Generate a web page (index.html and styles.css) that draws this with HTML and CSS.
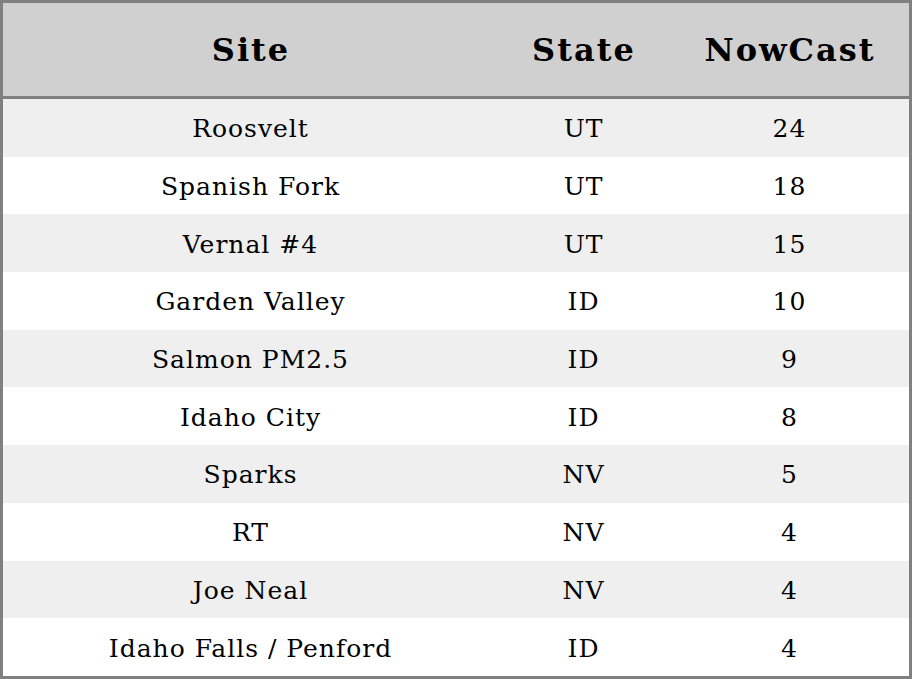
FILE: index.html
```html
<!DOCTYPE html>
<html>
<head>
<meta charset="utf-8">
<link rel="stylesheet" href="styles.css">
</head>
<body>
<div class="frame">
<table class="tbl">
<colgroup><col class="c1"><col class="c2"><col class="c3"></colgroup>
<thead>
<tr><th>Site</th><th>State</th><th>NowCast</th></tr>
</thead>
<tbody>
<tr><td>Roosvelt</td><td>UT</td><td>24</td></tr>
<tr><td>Spanish Fork</td><td>UT</td><td>18</td></tr>
<tr><td>Vernal #4</td><td>UT</td><td>15</td></tr>
<tr><td>Garden Valley</td><td>ID</td><td>10</td></tr>
<tr><td>Salmon PM2.5</td><td>ID</td><td>9</td></tr>
<tr><td>Idaho City</td><td>ID</td><td>8</td></tr>
<tr><td>Sparks</td><td>NV</td><td>5</td></tr>
<tr><td>RT</td><td>NV</td><td>4</td></tr>
<tr><td>Joe Neal</td><td>NV</td><td>4</td></tr>
<tr><td>Idaho Falls / Penford</td><td>ID</td><td>4</td></tr>
</tbody>
</table>
</div>
</body>
</html>
```
FILE: styles.css
```css
html, body {
  margin: 0;
  padding: 0;
  background: #ffffff;
}
.frame {
  width: 912px;
  height: 679px;
  box-sizing: border-box;
  border: 3px solid #808080;
  overflow: hidden;
}
.tbl {
  width: 906px;
  border-collapse: collapse;
  table-layout: fixed;
  font-family: "DejaVu Serif", serif;
  color: #000;
}
.c1 { width: 494px; }
.c2 { width: 172px; }
.c3 { width: 240px; }
.tbl th {
  background: #d0d0d0;
  height: 93px;
  padding: 0 0 0 2px;
  font-size: 32px;
  letter-spacing: 2px;
  font-weight: bold;
  text-align: center;
  vertical-align: middle;
  border-bottom: 3px solid #808080;
}
.tbl td {
  height: 55.7px;
  padding: 2px 0 0 1px;
  font-size: 25px;
  letter-spacing: 1px;
  text-align: center;
  vertical-align: middle;
}
.tbl tbody tr:nth-child(odd) td {
  background: #efefef;
}
```
